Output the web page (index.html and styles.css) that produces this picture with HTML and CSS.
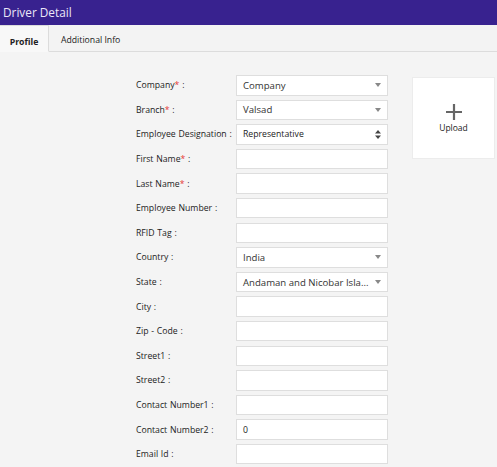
FILE: index.html
```html
<!DOCTYPE html>
<html lang="en">

<head>
    <meta charset="UTF-8">
    <meta name="viewport" content="width=device-width, initial-scale=1.0">
    <title>Driver Detail</title>
    <link rel="stylesheet" href="styles.css">
</head>

<body>
    <div class="header">Driver Detail</div>

    <div class="tabs">
        <span class="tab active">Profile</span>
        <span class="tab">Additional Info</span>
    </div>

    <div class="content">
        <div class="form">
            <label>Company<span class="req">*</span> :</label>
            <div class="field select"><span class="big">Company</span><span class="caret"></span></div>

            <label>Branch<span class="req">*</span> :</label>
            <div class="field select"><span class="big">Valsad</span><span class="caret"></span></div>

            <label>Employee Designation :</label>
            <div class="field select native"><span>Representative</span>
                <svg width="6" height="9" viewBox="0 0 6 9"><path d="M3 0 L6 3.5 H0 Z M3 9 L6 5.5 H0 Z" fill="#444"/></svg>
            </div>

            <label>First Name<span class="req">*</span> :</label>
            <div class="field"></div>

            <label>Last Name<span class="req">*</span> :</label>
            <div class="field"></div>

            <label>Employee Number :</label>
            <div class="field"></div>

            <label>RFID Tag :</label>
            <div class="field"></div>

            <label>Country :</label>
            <div class="field select"><span class="big">India</span><span class="caret"></span></div>

            <label>State :</label>
            <div class="field select"><span class="big">Andaman and Nicobar Isla...</span><span class="caret"></span></div>

            <label>City :</label>
            <div class="field"></div>

            <label>Zip - Code :</label>
            <div class="field"></div>

            <label>Street1 :</label>
            <div class="field"></div>

            <label>Street2 :</label>
            <div class="field"></div>

            <label>Contact Number1 :</label>
            <div class="field"></div>

            <label>Contact Number2 :</label>
            <div class="field"><span>0</span></div>

            <label>Email Id :</label>
            <div class="field"></div>
        </div>

        <div class="upload">
            <svg width="16" height="16" viewBox="0 0 16 16"><path d="M8 0 V16 M0 8 H16" stroke="#666" stroke-width="2.2"/></svg>
            <span>Upload</span>
        </div>
    </div>
</body>

</html>
```

FILE: styles.css
```css
* {
    margin: 0;
    padding: 0;
    box-sizing: border-box;
}

body {
    width: 497px;
    height: 467px;
    overflow: hidden;
    background-color: #f4f4f4;
    font-family: "Open Sans", "DejaVu Sans", sans-serif;
    color: #222;
}

.header {
    height: 25px;
    background-color: #38228f;
    color: #ebe7f8;
    font-size: 11.8px;
    line-height: 24px;
    padding-left: 3px;
}

.tabs {
    height: 27px;
    display: flex;
    align-items: flex-end;
    border-bottom: 1px solid #dcdcdc;
    background-color: #f3f3f3;
}

.tab {
    height: 27px;
    padding: 6px 12px 0;
    line-height: 20px;
    font-size: 8.7px;
    color: #222;
}

.tab.active {
    width: 49px;
    padding: 6px 0 0;
    text-align: center;
    font-weight: bold;
    background-color: #f8f8f8;
    border: 1px solid #dcdcdc;
    border-bottom: 1px solid #f8f8f8;
    border-left: none;
    margin-bottom: -1px;
    height: 27px;
}

.content {
    display: flex;
    align-items: flex-start;
    padding-top: 23px;
    padding-left: 136px;
}

.form {
    display: grid;
    grid-template-columns: 100px 152px;
    grid-auto-rows: 20.5px;
    row-gap: 4.1px;
    align-items: center;
}

.form label {
    font-size: 8.7px;
    color: #222;
    white-space: nowrap;
    word-spacing: 0.5px;
}

.req {
    color: #e53935;
}

.field {
    height: 100%;
    background-color: #fff;
    border: 1px solid #dedede;
    display: flex;
    align-items: center;
    justify-content: space-between;
    padding: 0 6px;
    font-size: 8.7px;
    color: #222;
    white-space: nowrap;
}

.field .big {
    font-size: 9.6px;
    color: #333;
}

.caret {
    width: 0;
    height: 0;
    border-left: 3px solid transparent;
    border-right: 3px solid transparent;
    border-top: 4px solid #888;
}

.upload {
    width: 83px;
    height: 82px;
    margin-left: 24px;
    margin-top: 2px;
    background-color: #fff;
    border: 1px solid #ececec;
    display: flex;
    flex-direction: column;
    align-items: center;
    justify-content: center;
    gap: 2px;
    font-size: 8.5px;
    color: #222;
}
```
